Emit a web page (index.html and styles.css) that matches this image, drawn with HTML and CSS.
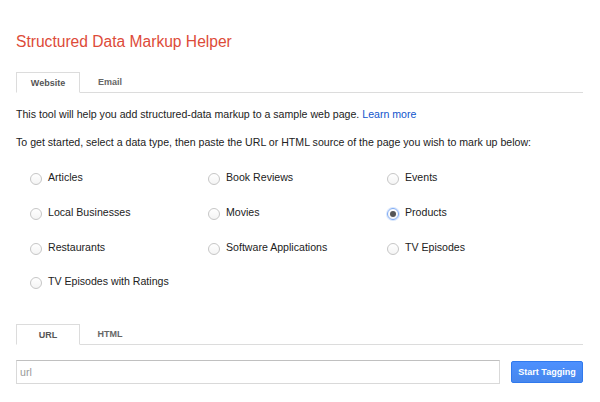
FILE: index.html
```html
<!DOCTYPE html>
<html>
<head>
<meta charset="utf-8">
<link rel="stylesheet" href="styles.css">
</head>
<body>
<div class="page">
  <h1 class="title">Structured Data Markup Helper</h1>
  <div class="tabs">
    <div class="tab active">Website</div>
    <div class="tab">Email</div>
  </div>
  <p class="intro">This tool will help you add structured-data markup to a sample web page. <a href="#" class="link">Learn more</a></p>
  <p class="intro">To get started, select a data type, then paste the URL or HTML source of the page you wish to mark up below:</p>
  <div class="types">
    <label class="opt"><span class="radio"></span>Articles</label>
    <label class="opt"><span class="radio"></span>Book Reviews</label>
    <label class="opt"><span class="radio"></span>Events</label>
    <label class="opt"><span class="radio"></span>Local Businesses</label>
    <label class="opt"><span class="radio"></span>Movies</label>
    <label class="opt"><span class="radio checked"></span>Products</label>
    <label class="opt"><span class="radio"></span>Restaurants</label>
    <label class="opt"><span class="radio"></span>Software Applications</label>
    <label class="opt"><span class="radio"></span>TV Episodes</label>
    <label class="opt"><span class="radio"></span>TV Episodes with Ratings</label>
  </div>
  <div class="tabs tabs-source">
    <div class="tab active">URL</div>
    <div class="tab">HTML</div>
  </div>
  <div class="url-row">
    <div class="input">url</div>
    <button class="btn">Start Tagging</button>
  </div>
</div>
</body>
</html>
```
FILE: styles.css
```css
html, body {
  margin: 0;
  padding: 0;
  background: #fff;
}
body {
  font-family: "Liberation Sans", Arial, sans-serif;
  color: #222;
}
.page {
  width: 567px;
  padding: 32px 0 0 16px;
}
.title {
  margin: 0;
  font-size: 15.6px;
  font-weight: normal;
  line-height: 20px;
  color: #dd4b39;
}
.tabs {
  display: flex;
  margin-top: 20px;
  height: 20px;
  border-bottom: 1px solid #dcdcdc;
}
.tab {
  width: 64px;
  box-sizing: border-box;
  height: 21px;
  line-height: 20px;
  text-align: center;
  font-size: 9px;
  font-weight: bold;
  color: #666;
}
.tab + .tab {
  width: 60px;
}
.tab.active {
  border: 1px solid #dcdcdc;
  border-bottom: 1px solid #fff;
  background: #fff;
  color: #555;
}
.intro {
  margin: 15px 0 0;
  font-size: 10.6px;
  line-height: 13px;
  color: #222;
}
.intro + .intro {
  margin-top: 15px;
}
.link {
  color: #1155cc;
  text-decoration: none;
}
.types {
  display: grid;
  grid-template-columns: 178px 179px 170px;
  grid-auto-rows: 34.7px;
  margin-top: 11px;
  padding-left: 14px;
}
.opt {
  display: flex;
  align-items: center;
  font-size: 10.6px;
  color: #222;
}
.radio {
  width: 12px;
  height: 12px;
  box-sizing: border-box;
  border-radius: 50%;
  border: 1px solid #c6c6c6;
  background: linear-gradient(#fff, #f4f4f4);
  margin-right: 6px;
  margin-top: 4px;
  display: flex;
  align-items: center;
  justify-content: center;
}
.radio.checked {
  border-color: #7eaaf4;
  box-shadow: 0 0 0 1px #d8e6fc;
}
.radio.checked::after {
  content: "";
  width: 6px;
  height: 6px;
  border-radius: 50%;
  background: #555;
}
.tabs-source {
  margin-top: 25px;
}
.url-row {
  display: flex;
  align-items: center;
  margin-top: 15px;
}
.input {
  width: 484px;
  height: 24px;
  box-sizing: border-box;
  border: 1px solid #d9d9d9;
  border-top-color: #c0c0c0;
  padding-left: 3px;
  font-size: 10.6px;
  line-height: 22px;
  color: #999;
}
.btn {
  margin-left: 11px;
  width: 72px;
  height: 22px;
  border: 1px solid #3079ed;
  border-radius: 2px;
  background: linear-gradient(#4d90fe, #4787ed);
  color: #fff;
  font-family: "Liberation Sans", Arial, sans-serif;
  font-size: 9px;
  font-weight: bold;
  padding: 0;
}
```
